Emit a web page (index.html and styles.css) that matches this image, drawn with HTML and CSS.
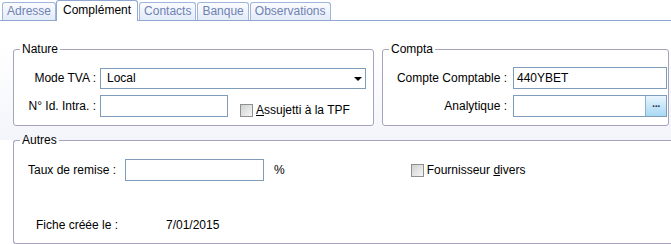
FILE: index.html
```html
<!DOCTYPE html>
<html lang="fr">
<head>
    <meta charset="UTF-8">
    <title>Fiche fournisseur</title>
    <link rel="stylesheet" href="styles.css">
</head>
<body>

<div class="tabs">
    <div class="tab">Adresse</div>
    <div class="tab active">Complément</div>
    <div class="tab">Contacts</div>
    <div class="tab">Banque</div>
    <div class="tab">Observations</div>
</div>

<div class="panel">
    <fieldset class="group nature">
        <legend>Nature</legend>
        <div class="row first">
            <label class="lbl">Mode TVA :</label>
            <div class="combo">Local<span class="arrow"></span></div>
        </div>
        <div class="row">
            <label class="lbl">N° Id. Intra. :</label>
            <div class="field intra"></div>
            <span class="check low"><span class="box"></span><span><u>A</u>ssujetti à la TPF</span></span>
        </div>
    </fieldset>

    <fieldset class="group compta">
        <legend>Compta</legend>
        <div class="row first">
            <label class="lbl">Compte Comptable :</label>
            <div class="field account">440YBET</div>
        </div>
        <div class="row">
            <label class="lbl">Analytique :</label>
            <div class="field account picker"><span class="dots">&middot;&middot;&middot;</span></div>
        </div>
    </fieldset>
</div>

<fieldset class="group autres">
    <legend>Autres</legend>
    <div class="row first">
        <label class="lbl">Taux de remise :</label>
        <div class="field rate"></div>
        <span class="pct">%</span>
        <span class="check"><span class="box"></span><span>Fournisseur <u>d</u>ivers</span></span>
    </div>
    <div class="row created">
        <span class="lbl">Fiche créée le :</span>
        <span class="date">7/01/2015</span>
    </div>
</fieldset>

</body>
</html>
```

FILE: styles.css
```css
body {
    margin: 0;
    font-family: "Liberation Sans", Arial, sans-serif;
    font-size: 12px;
    color: #000;
    background-color: #fff;
    overflow: hidden;
}

/* tab strip */
.tabs {
    display: flex;
    align-items: flex-end;
    height: 20px;
    padding-left: 2px;
    border-bottom: 1px solid #8fa8d2;
}

.tab {
    height: 17px;
    line-height: 17px;
    padding: 0 4px;
    margin-right: 1px;
    border: 1px solid #9fb6da;
    border-bottom: none;
    border-radius: 3px 3px 0 0;
    background: linear-gradient(#fbfcfe, #e3ebf8);
    color: #6e82b3;
}

.tab.active {
    height: 20px;
    line-height: 19px;
    padding: 0 6px;
    margin: 0 1px -1px -1px;
    border-color: #8fa8d2;
    background: #fff;
    color: #000;
}

/* tab page */
.panel {
    display: flex;
    gap: 8px;
    height: 119px;
    padding-left: 13px;
    background: linear-gradient(#fff 20%, #f3f5fb);
}

.group {
    margin: 21px 0 0 0;
    padding: 0;
    border: 1px solid #a8a2bd;
    border-radius: 3px;
    background: #fff;
    box-sizing: border-box;
}

.group legend {
    margin-left: 6px;
    padding: 0 2px;
    line-height: 15px;
}

.nature {
    width: 361px;
    height: 84px;
}

.compta {
    width: 287px;
    height: 84px;
}

.row {
    display: flex;
    align-items: center;
    height: 22px;
    margin-top: 6px;
}

.row.first {
    margin-top: 10px;
}

.lbl {
    text-align: right;
}

.nature .lbl {
    width: 82px;
    margin-right: 4px;
}

.compta .lbl {
    width: 124px;
    margin-right: 6px;
}

/* inputs */
.field,
.combo {
    box-sizing: border-box;
    height: 22px;
    line-height: 20px;
    padding-left: 3px;
    border: 1px solid #7f9db9;
    background: #fff;
}

.combo {
    position: relative;
    width: 266px;
    height: 21px;
    line-height: 19px;
    padding-left: 6px;
}

.arrow {
    position: absolute;
    right: 3px;
    top: 8px;
    border-left: 4px solid transparent;
    border-right: 4px solid transparent;
    border-top: 4px solid #000;
}

.intra {
    width: 128px;
}

.account {
    width: 154px;
}

.picker {
    display: flex;
    justify-content: flex-end;
    padding: 0;
}

.dots {
    width: 20px;
    border-left: 1px solid #8db2d0;
    background: linear-gradient(#e9f5fd, #a8d8f4);
    color: #1d3552;
    font-weight: bold;
    font-size: 11px;
    line-height: 20px;
    text-align: center;
    letter-spacing: -1px;
}

/* checkboxes */
.check {
    display: flex;
    align-items: center;
    gap: 3px;
}

.check .box {
    box-sizing: border-box;
    width: 13px;
    height: 13px;
    border: 1px solid #8e8f8f;
    background: linear-gradient(135deg, #cfd0d1, #f6f6f6);
}

.nature .check {
    margin-left: 12px;
}

.check.low {
    align-self: flex-end;
}

/* autres, its right edge runs off the window */
.autres {
    width: 658px;
    height: 111px;
    margin: -7px 0 0 13px;
    border-right: none;
    border-radius: 3px 0 0 3px;
}

.autres .row {
    padding-left: 14px;
}

.autres .row.first {
    margin-top: 11px;
}

.autres .lbl {
    width: 91px;
    margin-right: 6px;
    text-align: left;
}

.rate {
    width: 139px;
}

.pct {
    margin-left: 10px;
}

.autres .check {
    margin-left: 126px;
}

.row.created {
    height: 14px;
    margin-top: 37px;
    padding-left: 22px;
}

.created .lbl {
    width: 130px;
    margin-right: 0;
}
```
